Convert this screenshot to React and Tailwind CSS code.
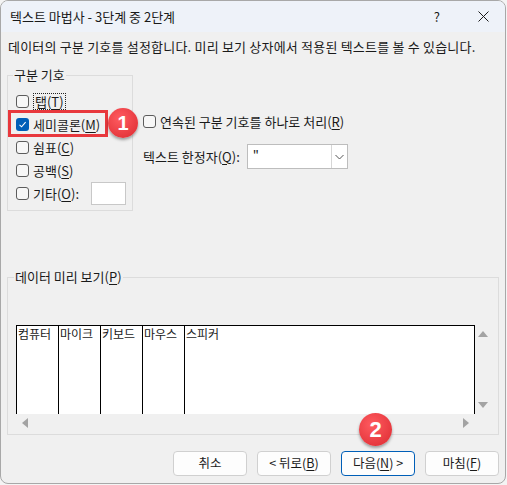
import React from 'react';

const font = "font-['Noto_Sans_CJK_KR','Noto_Sans',sans-serif]";

const Key = ({ children }) => <u className="underline-offset-2">{children}</u>;

const CheckBox = ({ checked }) =>
  checked ? (
    <span className="flex h-[13px] w-[13px] shrink-0 items-center justify-center rounded-[3px] bg-[#005fb8]">
      <svg width="9" height="9" viewBox="0 0 9 9">
        <path d="M1.5 4.8 L3.6 6.8 L7.6 2.2" fill="none" stroke="white" strokeWidth="1.1" />
      </svg>
    </span>
  ) : (
    <span className="h-[13px] w-[13px] shrink-0 rounded-[3px] border border-[#5c5c5c] bg-[#f7f7f7]" />
  );

const Badge = ({ n, className }) => (
  <div
    className={`absolute flex items-center justify-center rounded-full bg-[radial-gradient(circle_at_40%_35%,#ff5b60,#dc2a30)] font-bold text-white shadow-[0_2px_3px_rgba(0,0,0,0.35)] font-['Liberation_Sans',sans-serif] ${className}`}
  >
    {n}
  </div>
);

const Option = ({ checked, children }) => (
  <div className="flex h-[23px] items-center gap-[4px]">
    <CheckBox checked={checked} />
    {children}
  </div>
);

const Button = ({ children, primary }) => (
  <button
    className={`h-[25px] w-[74px] rounded-[4px] border bg-[#fdfdfd] text-[12.5px] text-[#1a1a1a] ${
      primary ? 'border-[#005fb8]' : 'border-[#d0d0d0]'
    }`}
  >
    {children}
  </button>
);

const Tri = ({ dir }) => {
  const d = {
    up: 'M0 8 L5 2 L10 8 Z',
    down: 'M0 2 L5 8 L10 2 Z',
    left: 'M8 0 L2 5 L8 10 Z',
    right: 'M2 0 L8 5 L2 10 Z',
  }[dir];
  return (
    <svg width="10" height="10" viewBox="0 0 10 10">
      <path d={d} fill="#a3a3a3" />
    </svg>
  );
};

export default function App() {
  const cols = ['컴퓨터', '마이크', '키보드', '마우스'];
  return (
    <div className={`h-[485px] w-[507px] bg-[#f4f4f4] ${font} text-[13px] text-[#1a1a1a]`}>
      <div className="relative flex h-[484px] w-[506px] flex-col overflow-hidden rounded-[8px] border border-[#a8a8a8] bg-[#f0f0f0]">
        {/* Title bar */}
        <div className="flex h-[31px] shrink-0 items-center bg-[#eef2f9] pl-[9px]">
          <span className="text-[13px]">텍스트 마법사 - 3단계 중 2단계</span>
          <span className="ml-auto mr-[38px] text-[13px]">?</span>
          <svg className="mr-[16px]" width="11" height="11" viewBox="0 0 11 11">
            <path d="M0.5 0.5 L10.5 10.5 M10.5 0.5 L0.5 10.5" stroke="#1a1a1a" strokeWidth="1" />
          </svg>
        </div>

        <div className="flex flex-1 flex-col px-[6px]">
          <p className="mt-[7px] pl-[1px] leading-[16px] tracking-[0.2px]">
            데이터의 구분 기호를 설정합니다. 미리 보기 상자에서 적용된 텍스트를 볼 수 있습니다.
          </p>

          <div className="mt-[20px] flex">
            {/* Delimiters group */}
            <div className="relative h-[136px] w-[126px] border border-[#dcdcdc] pl-[8px] pt-[14px]">
              <span className="absolute -top-[9px] left-[5px] bg-[#f0f0f0] px-[1px] leading-[16px]">구분 기호</span>
              <Option>
                <span className="border border-dotted border-[#222] px-[1px] leading-[15px]">
                  탭(<Key>T</Key>)
                </span>
              </Option>
              <Option checked>
                <span>
                  세미콜론(<Key>M</Key>)
                </span>
              </Option>
              <Option>
                <span>
                  쉼표(<Key>C</Key>)
                </span>
              </Option>
              <Option>
                <span>
                  공백(<Key>S</Key>)
                </span>
              </Option>
              <Option>
                <span>
                  기타(<Key>O</Key>):
                </span>
                <span className="ml-[8px] h-[23px] w-[35px] border border-[#c8c8c8] bg-white" />
              </Option>
            </div>

            {/* Right options */}
            <div className="ml-[10px] flex flex-col pt-[35px]">
              <Option>
                <span>
                  연속된 구분 기호를 하나로 처리(<Key>R</Key>)
                </span>
              </Option>
              <div className="mt-[11px] flex h-[25px] items-center">
                <span>
                  텍스트 한정자(<Key>Q</Key>):
                </span>
                <div className="ml-[7px] flex h-[25px] w-[101px] border border-[#bdbdbd] bg-white">
                  <span className="flex-1 pl-[5px] leading-[20px]">"</span>
                  <span className="flex w-[16px] items-center justify-center border-l border-[#d6d6d6]">
                    <svg width="9" height="6" viewBox="0 0 9 6">
                      <path d="M0.5 1 L4.5 5 L8.5 1" fill="none" stroke="#555" strokeWidth="1" />
                    </svg>
                  </span>
                </div>
              </div>
            </div>
          </div>

          {/* Preview group */}
          <div className="relative mt-[66px] flex h-[158px] w-[492px] flex-col border border-[#dcdcdc] pl-[8px] pt-[47px]">
            <span className="absolute -top-[9px] left-[6px] bg-[#f0f0f0] px-[1px] leading-[16px]">
              데이터 미리 보기(<Key>P</Key>)
            </span>
            <div className="flex h-[89px]">
              <div className="flex w-[459px] border-x border-t border-black bg-white text-[12px] leading-[15px]">
                {cols.map((c) => (
                  <div key={c} className="w-[42px] border-r border-black pl-px">
                    {c}
                  </div>
                ))}
                <div className="flex-1 pl-px">스피커</div>
              </div>
              <div className="flex w-[16px] flex-col items-center justify-between pb-[4px] pt-[4px]">
                <Tri dir="up" />
                <Tri dir="down" />
              </div>
            </div>
            <div className="flex h-[17px] w-[459px] items-center justify-between px-[4px]">
              <Tri dir="left" />
              <Tri dir="right" />
            </div>
          </div>

          {/* Buttons */}
          <div className="mt-[16px] flex justify-end gap-[10px]">
            <Button>취소</Button>
            <Button>
              &lt; 뒤로(<Key>B</Key>)
            </Button>
            <Button primary>
              다음(<Key>N</Key>) &gt;
            </Button>
            <Button>
              마침(<Key>F</Key>)
            </Button>
          </div>
        </div>

        {/* Annotations */}
        <div className="absolute left-[7px] top-[109px] h-[27px] w-[100px] border-[3px] border-[#e8383d]" />
        <Badge n="1" className="left-[107px] top-[107px] h-[30px] w-[30px] text-[20px]" />
        <Badge n="2" className="left-[358px] top-[412px] h-[33px] w-[33px] text-[22px]" />
      </div>
    </div>
  );
}
